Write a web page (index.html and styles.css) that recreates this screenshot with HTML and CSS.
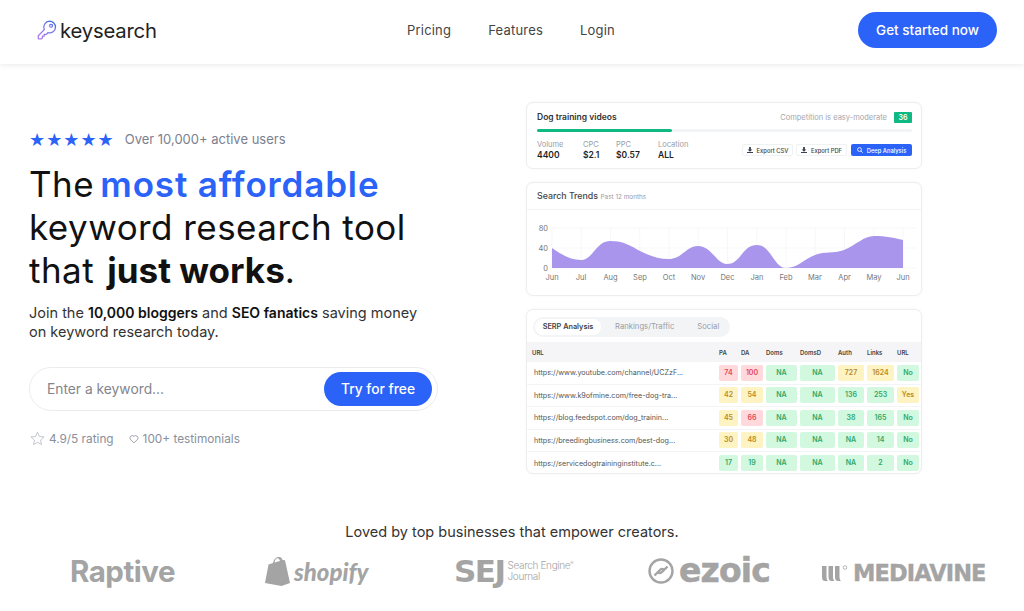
FILE: index.html
```html
<!DOCTYPE html>
<html lang="en">
<head>
  <meta charset="UTF-8">
  <meta name="viewport" content="width=device-width, initial-scale=1.0">
  <title>keysearch</title>
  <link rel="stylesheet" href="styles.css">
</head>
<body>
  <!--header-->
  <header class="topbar">
    <a class="logo" href="#">
      <svg class="logoKey" viewBox="0 0 20 20" width="20" height="20" fill="none" stroke="url(#keyGrad)" stroke-width="1.3" stroke-linejoin="round">
        <defs>
          <linearGradient id="keyGrad" x1="1" y1="0" x2="0" y2="1">
            <stop offset="0" stop-color="#3f6fe8"/>
            <stop offset="1" stop-color="#b77df0"/>
          </linearGradient>
        </defs>
        <path d="M12.6 1.2a6 6 0 0 1 5.9 6 6 6 0 0 1-7.6 5.5l-1.6 1.7H7.2v1.8H5.4v1.7l-1 .9H1.3v-3l6-6.2a6 6 0 0 1 5.3-8.4z"/>
        <circle cx="14" cy="5.8" r="1.5"/>
      </svg>
      <span>keysearch</span>
    </a>
    <nav class="mainNav">
      <a href="#">Pricing</a>
      <a href="#">Features</a>
      <a href="#">Login</a>
    </nav>
    <a class="startBtn" href="#">Get started now</a>
  </header>

  <section class="hero">
    <!--left side-->
    <div class="heroText">
      <div class="usersRow">
        <span class="stars">★★★★★</span>
        <span>Over 10,000+ active users</span>
      </div>
      <h1>The <em>most affordable</em><br>keyword research tool<br>that <strong>just works</strong>.</h1>
      <p class="lead">Join the <strong>10,000 bloggers</strong> and <strong>SEO fanatics</strong> saving money<br>on keyword research today.</p>
      <form class="searchForm">
        <input type="text" placeholder="Enter a keyword...">
        <button type="button">Try for free</button>
      </form>
      <div class="ratingRow">
        <svg viewBox="0 0 16 16" width="15" height="15" fill="none" stroke="#b9bdc6" stroke-width="0.9" stroke-linejoin="round"><path d="M8 1.2l2 4.6 5 .5-3.800 3.300 1.100 4.900L8 12l-4.300 2.500 1.100-4.900L1 6.300l5-.5z"/></svg>
        <span class="ratingText">4.9/5 rating</span>
        <svg viewBox="0 0 16 16" width="10" height="10" fill="none" stroke="#8a8f9c" stroke-width="1.300" stroke-linejoin="round"><path d="M8 14.300L1.800 8A3.800 3.800 0 0 1 8 3.800 3.800 3.800 0 0 1 14.200 8z"/></svg>
        <span>100+ testimonials</span>
      </div>
    </div>

    <!--right side-->
    <div class="panels">
      <div class="card keywordCard">
        <div class="keywordTop">
          <h3>Dog training videos</h3>
          <span class="compText">Competition is easy-moderate</span>
          <span class="compBadge">36</span>
        </div>
        <div class="progress"><div class="progressFill"></div></div>
        <div class="keywordBottom">
          <div class="stat statVolume"><span>Volume</span><b>4400</b></div>
          <div class="stat statCpc"><span>CPC</span><b>$2.1</b></div>
          <div class="stat statPpc"><span>PPC</span><b>$0.57</b></div>
          <div class="stat"><span>Location</span><b>ALL</b></div>
          <div class="actions">
            <a class="exportBtn btnCsv"><svg viewBox="0 0 10 10" width="6" height="6" fill="#3b4252"><path d="M3.500 0h3v4h2.500L5 8 1 4h2.500zM0 8.500h10V10H0z"/></svg>Export CSV</a>
            <a class="exportBtn btnPdf"><svg viewBox="0 0 10 10" width="6" height="6" fill="#3b4252"><path d="M3.500 0h3v4h2.500L5 8 1 4h2.500zM0 8.500h10V10H0z"/></svg>Export PDF</a>
            <a class="deepBtn"><svg viewBox="0 0 10 10" width="6" height="6" fill="none" stroke="#fff" stroke-width="1.400"><circle cx="4.200" cy="4.200" r="3.200"/><path d="M6.600 6.600L9.500 9.500"/></svg>Deep Analysis</a>
          </div>
        </div>
      </div>

      <div class="card trendCard">
        <div class="trendHead"><b>Search Trends</b> <span>Past 12 months</span></div>
        <svg class="chart" viewBox="0 0 396 86" width="396" height="86">
          <g stroke="#f0f1f4" stroke-width="0.6">
            <path d="M26 18v40M55.250 18v40M84.500 18v40M113.750 18v40M143 18v40M172.250 18v40M201.500 18v40M230.750 18v40M260 18v40M289.250 18v40M318.500 18v40M347.750 18v40M377 18v40"/>
            <path d="M26 18H390M26 38H390M26 58H390"/>
          </g>
          <path fill="#a996ec" d="M26 38C36 45 45 50 55 50C67 50 70 31 84 31C98 31 105 36 114 41C124 46 132 49 143 49C156 49 160 36 172 36C186 36 190 54 201 54C215 54 216 35 231 35C245 35 248 58 260 58C272 58 278 49 289 45C300 41 306 44 318 40C330 35 338 26 348 26C360 26 368 28 377 30V58H26z"/>
          <g class="axisY">
            <text x="22" y="21" text-anchor="end">80</text>
            <text x="22" y="41" text-anchor="end">40</text>
            <text x="22" y="61" text-anchor="end">0</text>
          </g>
          <g class="axisX" text-anchor="middle">
            <text x="26" y="70">Jun</text><text x="55" y="70">Jul</text><text x="84.500" y="70">Aug</text>
            <text x="114" y="70">Sep</text><text x="143" y="70">Oct</text><text x="172" y="70">Nov</text>
            <text x="201.500" y="70">Dec</text><text x="231" y="70">Jan</text><text x="260" y="70">Feb</text>
            <text x="289" y="70">Mar</text><text x="318.500" y="70">Apr</text><text x="348" y="70">May</text>
            <text x="377" y="70">Jun</text>
          </g>
        </svg>
      </div>

      <div class="card serpCard">
        <div class="tabs">
          <span class="tab tabActive">SERP Analysis</span>
          <span class="tab tabRank">Rankings/Traffic</span>
          <span class="tab tabSocial">Social</span>
        </div>
        <div class="serpRow serpHead">
          <span>URL</span><span>PA</span><span>DA</span><span>Doms</span><span>DomsD</span><span>Auth</span><span>Links</span><span>URL</span>
        </div>
        <div class="serpRow">
          <span class="url">https://www.youtube.com/channel/UCZzF...</span>
          <i class="red">74</i><i class="red">100</i><i class="green">NA</i><i class="green">NA</i><i class="yellow">727</i><i class="yellow">1624</i><i class="green">No</i>
        </div>
        <div class="serpRow">
          <span class="url">https://www.k9ofmine.com/free-dog-tra...</span>
          <i class="yellow">42</i><i class="yellow">54</i><i class="green">NA</i><i class="green">NA</i><i class="green">136</i><i class="green">253</i><i class="yellow">Yes</i>
        </div>
        <div class="serpRow">
          <span class="url">https://blog.feedspot.com/dog_trainin...</span>
          <i class="yellow">45</i><i class="red">66</i><i class="green">NA</i><i class="green">NA</i><i class="green">38</i><i class="green">165</i><i class="green">No</i>
        </div>
        <div class="serpRow">
          <span class="url">https://breedingbusiness.com/best-dog...</span>
          <i class="yellow">30</i><i class="yellow">48</i><i class="green">NA</i><i class="green">NA</i><i class="green">NA</i><i class="green">14</i><i class="green">No</i>
        </div>
        <div class="serpRow">
          <span class="url">https://servicedogtraininginstitute.c...</span>
          <i class="green">17</i><i class="green">19</i><i class="green">NA</i><i class="green">NA</i><i class="green">NA</i><i class="green">2</i><i class="green">No</i>
        </div>
      </div>
    </div>
  </section>

  <!--logos-->
  <section class="brands">
    <p>Loved by top businesses that empower creators.</p>
    <div class="brandRow">
      <span class="raptive">Raptive</span>
      <span class="shopify">
        <svg viewBox="0 0 25 29" width="25" height="29"><path fill="#a4a4a4" d="M3.500 7.500L8 6C9 1 12 0 14 0c2 0 3 1 3.500 3l2.500.2L25 26l-8.500 3L0 26zM9.500 5.500l5.500-1.500C14.500 2 13.500 1.200 12.500 1.200 11 1.200 10 3 9.500 5.500z"/></svg>
        <b>shopify</b>
      </span>
      <span class="sej"><b>SEJ</b><small>Search Engine<sup>®</sup><br>Journal</small></span>
      <span class="ezoic">
        <svg viewBox="0 0 26 26" width="26" height="26" fill="none" stroke="#a4a4a4" stroke-width="2.400"><circle cx="13" cy="13" r="11.500"/><path d="M6.500 17.500l5.500-5.500c1.500-1.500 3-1.500 3.500 0M19.500 8.500L14 14c-1.500 1.500-3 1.500-3.500 0"/></svg>
        <b>ezoic</b>
      </span>
      <span class="mediavine">
        <svg viewBox="0 0 28 18" width="28" height="18" fill="#a4a4a4"><path d="M0 2h4.500v11c0 1.500.5 3 1.500 4H3C1 17 0 15.500 0 13zM6.500 2H11v11c0 1.500.5 3 1.500 4h-3c-2 0-3-1.500-3-4zM13 2h4.500v11c0 1.500.5 3 1.500 4h-3c-2 0-3-1.500-3-4z"/><circle cx="23" cy="3.500" r="1.800" fill="none" stroke="#a4a4a4" stroke-width="0.800"/></svg>
        <b>MEDIAVINE</b>
      </span>
    </div>
  </section>
</body>
</html>
```

FILE: styles.css
```css
*{box-sizing: border-box;}
body{
  margin:0;
  font-family:"Inter","Noto Sans",sans-serif;
  color:#111;
  background:#fff;
}
a{text-decoration:none; color:inherit;}

/*header*/
.topbar{
  height:64px;
  display:grid;
  grid-template-columns:370px 451px 139px;
  align-items:center;
  padding:0 0 4px 37px;
  box-shadow:0 1px 6px rgba(0,0,0,0.09);
}
.logo{
  display:flex;
  align-items:center;
  gap:3px;
  font-size:20.300px;
  color:#222;
  letter-spacing:-0.2px;
}
.logoKey{flex:none;}
.mainNav{
  display:flex;
  gap:37px;
  font-size:13px;
  color:#444;
  letter-spacing:0.2px;
}
.startBtn{
  height:36px;
  line-height:36px;
  text-align:center;
  border-radius:18px;
  background:#2b62f8;
  color:#fff;
  font-size:13.500px;
  font-weight:500;
}

/*hero*/
.hero{
  display:grid;
  grid-template-columns:497px 396px;
  padding:38px 0 0 29px;
}
.heroText{padding-top:28px;}
.usersRow{
  display:flex;
  align-items:center;
  gap:10px;
  height:18px;
  font-size:13px;
  color:#7b8090;
}
.stars{
  color:#2b62f8;
  font-size:18px;
  letter-spacing:1px;
  font-family:"DejaVu Sans",sans-serif;
}
h1{
  margin:15px 0 0;
  font-size:35px;
  line-height:43px;
  font-weight:400;
  color:#111;
  letter-spacing:0.450px;
}
h1 em{
  font-style:normal;
  font-weight:600;
  color:#2b62f8;
  letter-spacing:0.850px;
  margin-left:-4px;
}
h1 strong{font-weight:700; letter-spacing:0; margin-left:3px;}
.lead{
  margin:11px 0 0;
  font-size:14.500px;
  line-height:19px;
  color:#333;
}
.lead strong{font-size:14px; font-weight:600; color:#111;}
.searchForm{
  width:409px;
  height:44px;
  margin-top:26px;
  display:flex;
  align-items:center;
  justify-content:space-between;
  padding:0 5px 0 17px;
  border:1px solid #ececf0;
  border-radius:22px;
}
.searchForm input{
  border:none;
  outline:none;
  font:inherit;
  font-size:13.800px;
  width:200px;
  padding:0;
}
.searchForm input::placeholder{color:#83858c; opacity:1;}
.searchForm button{
  width:108px;
  height:34px;
  border:none;
  border-radius:17px;
  background:#2b62f8;
  color:#fff;
  font:inherit;
  font-size:13.800px;
  font-weight:500;
}
.ratingRow{
  display:flex;
  align-items:center;
  gap:4px;
  margin-top:20px;
  margin-left:1px;
  font-size:11.800px;
  color:#8a8f9c;
}
.ratingText{margin:0 11px 0 0;}

/*panels*/
.panels{
  display:flex;
  flex-direction:column;
  gap:13px;
}
.card{
  border:1px solid #eceef1;
  border-radius:7px;
  box-shadow:0 0 3px rgba(0,0,0,0.04);
  background:#fff;
}
.keywordCard{
  height:67px;
  padding:7px 9px 0 10px;
}
.keywordTop{
  display:flex;
  align-items:center;
  height:14px;
}
.keywordTop h3{
  margin:0;
  flex:1;
  font-size:8.500px;
  font-weight:600;
  color:#333;
}
.compText{
  font-size:7.500px;
  color:#a3a6ae;
}
.compBadge{
  width:18px;
  height:11px;
  line-height:11px;
  margin-left:7px;
  text-align:center;
  border-radius:1px;
  background:#0fb981;
  color:#fff;
  font-size:7px;
  font-weight:600;
}
.progress{
  height:3px;
  margin-top:5px;
  border-radius:2px;
  background:#f3f4f6;
}
.progressFill{
  width:135px;
  height:3px;
  border-radius:2px;
  background:#0fb981;
}
.keywordBottom{
  display:flex;
  align-items:center;
  margin-top:7px;
}
.stat{
  display:flex;
  flex-direction:column;
  font-size:7.500px;
  line-height:11px;
  color:#9a9da6;
}
.stat b{font-size:8.500px; color:#222; font-weight:600;}
.statVolume{width:46px;}
.statCpc{width:33px;}
.statPpc{width:42px;}
.actions{
  display:flex;
  gap:3px;
  margin-left:auto;
}
.exportBtn, .deepBtn{
  display:flex;
  align-items:center;
  justify-content:center;
  gap:4px;
  height:12px;
  font-size:5.800px;
  border-radius:2px;
}
.exportBtn{
  border:1px solid #f0f1f3;
  color:#444;
  font-weight:500;
}
.btnCsv,.btnPdf{width:51px;}
.deepBtn{
  width:61px;
  margin-left:1px;
  background:#2b62f8;
  color:#fff;
  font-weight:500;
}
.trendCard{height:114px;}
.trendHead{
  height:27px;
  padding:7px 0 0 10px;
  border-bottom:1px solid #f1f2f4;
  font-size:8.800px;
  color:#444;
}
.trendHead b{font-weight:500;}
.trendHead span{font-size:6.400px; color:#9a9da6;}
.chart{display:block; margin-left:-1px;}
.chart text{font-family:"Inter","Noto Sans",sans-serif; font-size:7.500px; fill:#777;}
.serpCard{height:165px; overflow:hidden;}
.tabs{
  width:197px;
  height:20px;
  margin:7px 0 5px 6px;
  padding:2px;
  display:flex;
  align-items:center;
  background:#f3f4f6;
  border-radius:10px;
  font-size:7.700px;
  color:#9a9da6;
  white-space:nowrap;
}
.tab{
  height:16px;
  line-height:16px;
}
.tabActive{
  width:66px;
  text-align:center;
  border-radius:8px;
  background:#fff;
  color:#444;
  font-size:7.300px;
  font-weight:600;
}
.tabRank{margin-left:14px;}
.tabSocial{margin-left:23px;}
.serpRow{
  display:grid;
  grid-template-columns:182px 19px 22px 31px 35px 26px 27px 22px;
  column-gap:3px;
  align-items:center;
  height:22.500px;
  padding-left:7px;
  border-bottom:1px solid #f3f4f6;
  font-size:6.500px;
}
.serpRow:last-child{border-bottom:none;}
.serpHead{
  height:20px;
  background:#f5f5f7;
  border-bottom:none;
  color:#444;
  font-size:6px;
  font-weight:600;
}
.serpHead span:first-child{margin-left:-2px;}
.url{
  font-size:7.200px;
  color:#555;
}
.serpRow i{
  height:16px;
  line-height:16px;
  font-style:normal;
  text-align:center;
  border-radius:2px;
  font-size:7px;
  font-weight:600;
}
.green{background:#d3f8e0; color:#2ea86a;}
.yellow{background:#fef3c3; color:#b98a25;}
.red{background:#ffd9dc; color:#e2475b;}

/*logos*/
.brands{margin-top:48px;}
.brands p{
  margin:0;
  text-align:center;
  font-size:14.500px;
  line-height:20px;
  color:#333;
}
.brandRow{
  display:grid;
  grid-template-columns:195px 189px 194px 174px auto;
  align-items:center;
  height:36px;
  margin-top:11px;
  padding-left:70px;
  color:#a4a4a4;
}
.brandRow span{display:flex; align-items:center;}
.raptive{font-size:29.500px; font-weight:700; letter-spacing:-0.500px;}
.shopify{gap:4px;}
.shopify b{font-family:"Lato",sans-serif; font-style:italic; font-size:24px; font-weight:900;}
.sej{gap:3px;}
.sej b{font-family:"DejaVu Sans",sans-serif; font-size:31px; font-weight:700; letter-spacing:-1.500px;}
.sej small{font-size:10px; line-height:11px; font-weight:300; letter-spacing:-0.350px;}
.sej sup{font-size:5px; line-height:0;}
.ezoic{gap:5px;}
.ezoic b{font-family:"DejaVu Sans",sans-serif; font-size:33px; font-weight:700; letter-spacing:-0.800px; line-height:28px; -webkit-text-stroke:0.5px #a4a4a4;}
.mediavine{gap:3px; margin-top:3px;}
.mediavine b{font-family:"DejaVu Sans",sans-serif; font-size:22.500px; font-weight:700; letter-spacing:-0.900px; -webkit-text-stroke:0.4px #a4a4a4;}
```
